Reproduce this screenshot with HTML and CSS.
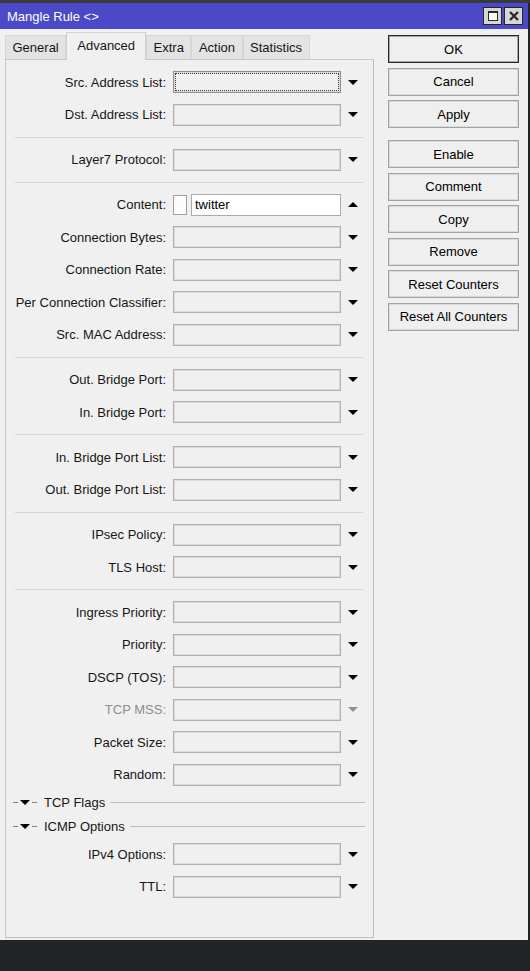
FILE: index.html
```html
<!DOCTYPE html>
<html>
<head>
<meta charset="utf-8">
<title>Mangle Rule</title>
<link rel="stylesheet" href="styles.css">
</head>
<body>
<div class="window">
  <div class="titlebar">
    <span class="title">Mangle Rule &lt;&gt;</span>
    <div class="tb-buttons">
      <div class="tb-btn"><svg width="12" height="12" viewBox="0 0 12 12"><rect x="1.5" y="1.5" width="9" height="9" fill="#fff" stroke="#2a2a2a" stroke-width="1"/><line x1="1" y1="2" x2="11" y2="2" stroke="#2a2a2a" stroke-width="2"/></svg></div>
      <div class="tb-btn"><svg width="12" height="12" viewBox="0 0 12 12"><path d="M2 2 L10 10 M10 2 L2 10" stroke="#2a2a2a" stroke-width="2.4"/></svg></div>
    </div>
  </div>
  <div class="main">
    <div class="left">
      <div class="tabs">
        <div class="tab">General</div>
        <div class="tab active">Advanced</div>
        <div class="tab">Extra</div>
        <div class="tab">Action</div>
        <div class="tab">Statistics</div>
      </div>
      <div class="panel">
        <div class="row"><span class="label">Src. Address List:</span><span class="input focused"></span><span class="dd"><i class="down"></i></span></div>
        <div class="row"><span class="label">Dst. Address List:</span><span class="input"></span><span class="dd"><i class="down"></i></span></div>
        <div class="sep"></div>
        <div class="row"><span class="label">Layer7 Protocol:</span><span class="input"></span><span class="dd"><i class="down"></i></span></div>
        <div class="sep"></div>
        <div class="row"><span class="label">Content:</span><span class="check"></span><span class="input text">twitter</span><span class="dd"><i class="up"></i></span></div>
        <div class="row"><span class="label">Connection Bytes:</span><span class="input"></span><span class="dd"><i class="down"></i></span></div>
        <div class="row"><span class="label">Connection Rate:</span><span class="input"></span><span class="dd"><i class="down"></i></span></div>
        <div class="row"><span class="label">Per Connection Classifier:</span><span class="input"></span><span class="dd"><i class="down"></i></span></div>
        <div class="row"><span class="label">Src. MAC Address:</span><span class="input"></span><span class="dd"><i class="down"></i></span></div>
        <div class="sep"></div>
        <div class="row"><span class="label">Out. Bridge Port:</span><span class="input"></span><span class="dd"><i class="down"></i></span></div>
        <div class="row"><span class="label">In. Bridge Port:</span><span class="input"></span><span class="dd"><i class="down"></i></span></div>
        <div class="sep"></div>
        <div class="row"><span class="label">In. Bridge Port List:</span><span class="input"></span><span class="dd"><i class="down"></i></span></div>
        <div class="row"><span class="label">Out. Bridge Port List:</span><span class="input"></span><span class="dd"><i class="down"></i></span></div>
        <div class="sep"></div>
        <div class="row"><span class="label">IPsec Policy:</span><span class="input"></span><span class="dd"><i class="down"></i></span></div>
        <div class="row"><span class="label">TLS Host:</span><span class="input"></span><span class="dd"><i class="down"></i></span></div>
        <div class="sep"></div>
        <div class="row"><span class="label">Ingress Priority:</span><span class="input"></span><span class="dd"><i class="down"></i></span></div>
        <div class="row"><span class="label">Priority:</span><span class="input"></span><span class="dd"><i class="down"></i></span></div>
        <div class="row"><span class="label">DSCP (TOS):</span><span class="input"></span><span class="dd"><i class="down"></i></span></div>
        <div class="row disabled"><span class="label">TCP MSS:</span><span class="input"></span><span class="dd"><i class="down"></i></span></div>
        <div class="row"><span class="label">Packet Size:</span><span class="input"></span><span class="dd"><i class="down"></i></span></div>
        <div class="row"><span class="label">Random:</span><span class="input"></span><span class="dd"><i class="down"></i></span></div>
        <div class="group-head"><span class="dash"></span><i class="down"></i><span class="dash"></span><span class="gh-text">TCP Flags</span><span class="gh-line"></span></div>
        <div class="group-head"><span class="dash"></span><i class="down"></i><span class="dash"></span><span class="gh-text">ICMP Options</span><span class="gh-line"></span></div>
        <div class="row"><span class="label">IPv4 Options:</span><span class="input"></span><span class="dd"><i class="down"></i></span></div>
        <div class="row"><span class="label">TTL:</span><span class="input"></span><span class="dd"><i class="down"></i></span></div>
      </div>
    </div>
    <div class="right">
      <div class="btn default">OK</div>
      <div class="btn">Cancel</div>
      <div class="btn">Apply</div>
      <div class="btn group-start">Enable</div>
      <div class="btn">Comment</div>
      <div class="btn">Copy</div>
      <div class="btn">Remove</div>
      <div class="btn">Reset Counters</div>
      <div class="btn">Reset All Counters</div>
    </div>
  </div>
</div>
</body>
</html>
```
FILE: styles.css
```css
* { box-sizing: border-box; }
html, body { margin: 0; padding: 0; }
body {
  background: #232426;
  border-top: 3px solid #3a3a3a;
  font-family: "Liberation Sans", Arial, sans-serif;
  font-size: 13px;
  color: #161616;
}
.window {
  width: 528px;
  height: 937px;
  background: #f0f0f0;
  display: flex;
  flex-direction: column;
}
.titlebar {
  height: 26px;
  background: #4a4ac8;
  color: #fff;
  display: flex;
  align-items: center;
  justify-content: space-between;
  padding: 0 5px 0 7px;
  flex: none;
}
.title { font-size: 13px; }
.tb-buttons { display: flex; gap: 2px; }
.tb-btn {
  width: 19px;
  height: 18px;
  border: 1px solid #262626;
  background: #d6d6d6;
  display: flex;
  align-items: center;
  justify-content: center;
}
.main {
  display: flex;
  padding: 3px 9px 0 5px;
}
.left { width: 369px; flex: none; }
.tabs {
  display: flex;
  align-items: flex-end;
  height: 27px;
}
.tab {
  height: 24px;
  padding: 0 6.5px;
  border: 1px solid #d6d6d6;
  border-bottom: none;
  background: #e3e3e3;
  display: flex;
  align-items: center;
  white-space: nowrap;
}
.tab.active {
  height: 28px;
  margin-bottom: -1px;
  padding: 0 10px 2px;
  background: #f0f0f0;
  border-color: #d0d0d0;
  position: relative;
  z-index: 1;
}
.panel {
  height: 879px;
  border: 1px solid #c8c8c8;
  border-right-color: #bdbdbd;
  border-bottom-color: #bdbdbd;
  padding-top: 6px;
}
.row {
  height: 32.5px;
  display: flex;
  align-items: center;
}
.label {
  width: 160px;
  margin-right: 7px;
  text-align: right;
  white-space: nowrap;
}
.input {
  width: 168px;
  height: 22px;
  border: 1px solid #b0b0b0;
  box-shadow: inset 0 0 0 1px #dadada;
  background: #f0f0f0;
}
.input.focused {
  border-color: #8f8f8f;
  outline: 1px dotted #333;
  outline-offset: -3px;
}
.check {
  width: 14px;
  height: 20px;
  border: 1px solid #a0a0a0;
  background: #fcfcfc;
  margin-right: 4px;
}
.input.text {
  width: 150px;
  background: #fff;
  box-shadow: none;
  border-color: #ababab;
  color: #000;
  padding-left: 3px;
  display: flex;
  align-items: center;
}
.dd {
  width: 23px;
  display: flex;
  justify-content: center;
}
.down {
  display: block;
  width: 0;
  height: 0;
  border-left: 5.5px solid transparent;
  border-right: 5.5px solid transparent;
  border-top: 5px solid #000;
}
.up {
  display: block;
  width: 0;
  height: 0;
  border-left: 5.5px solid transparent;
  border-right: 5.5px solid transparent;
  border-bottom: 5px solid #000;
}
.disabled .label { color: #8d8d8d; }
.disabled .down { border-top-color: #8e958e; }
.sep {
  height: 12.5px;
  display: flex;
  align-items: center;
  padding: 0 10px 0 9px;
}
.sep::before {
  content: "";
  flex: 1;
  height: 1px;
  background: #d6d6d6;
}
.group-head {
  height: 23.5px;
  display: flex;
  align-items: center;
  padding: 0 8px 0 7px;
}
.dash {
  width: 5px;
  height: 1px;
  background: #808080;
}
.group-head .down { margin: 0 2px; }
.gh-text { margin: 0 5px 0 7px; white-space: nowrap; }
.gh-line {
  flex: 1;
  height: 1px;
  background: #bdbdbd;
}
.right {
  width: 131px;
  margin-left: 14px;
  padding-top: 3px;
  flex: none;
}
.btn {
  height: 28px;
  margin-bottom: 4.5px;
  border: 1px solid #a3a3a3;
  box-shadow: inset 0 0 0 1px #d9d9d9;
  background: #efefef;
  color: #000;
  display: flex;
  align-items: center;
  justify-content: center;
  white-space: nowrap;
}
.btn.default {
  border-color: #262626;
  box-shadow: inset 0 0 0 1px #a8a8a8;
}
.btn.group-start { margin-top: 12px; }
```
